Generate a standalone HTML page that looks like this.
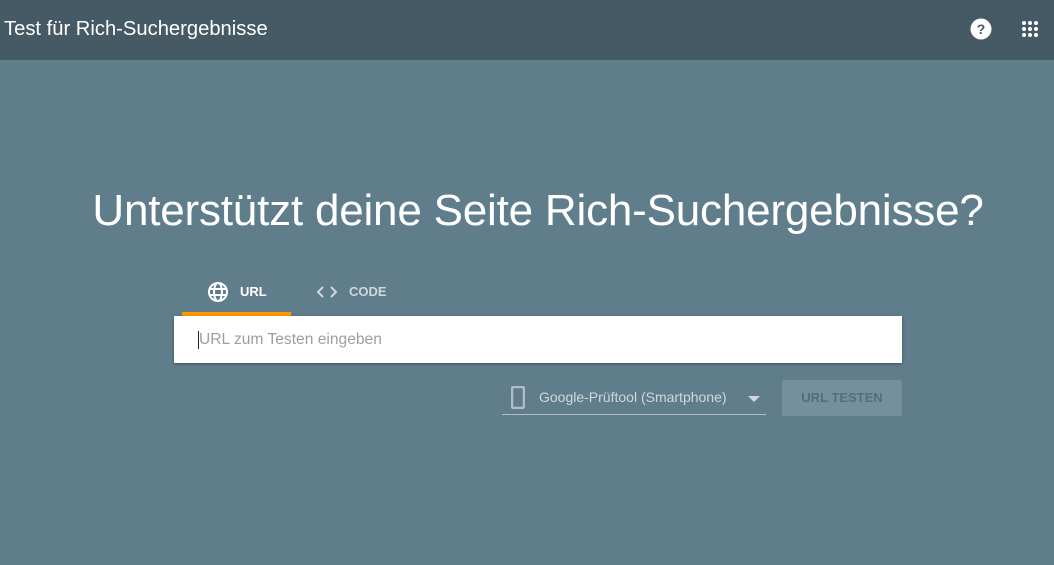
<!DOCTYPE html>
<html><head><style>
body{margin:0;width:1054px;height:565px;background:#607d8b;font-family:"Liberation Sans",sans-serif;overflow:hidden;position:relative}
.top{position:absolute;left:0;top:0;width:1054px;height:60px;background:#455a64}
.title{position:absolute;left:4px;top:18px;color:#fff;font-size:20.2px}
h1{position:absolute;left:0;width:1076px;top:186px;margin:0;text-align:center;color:#fff;font-weight:300;font-size:44px;letter-spacing:-0.2px}
.tab{position:absolute;top:284px;font-size:13px;font-weight:bold}
.ul{position:absolute;left:182px;top:312px;width:109px;height:4px;background:#ff9800}
.inp{position:absolute;left:174px;top:316px;width:728px;height:47px;background:#fff;box-shadow:0 1px 3px rgba(0,0,0,.35)}
.ph{position:absolute;left:24px;top:15px;font-size:15.6px;color:#9e9e9e;border-left:1px solid #222;padding-left:0}
.sel{position:absolute;left:502px;top:380px;width:264px;height:34px;border-bottom:1px solid #b0bec5}
.btn{position:absolute;left:782px;top:380px;width:120px;height:36px;background:#74909c;border-radius:2px;color:#546e7a;font-size:13px;font-weight:bold;text-align:center;line-height:36px}
</style></head><body>
<div class="top"><div class="title">Test für Rich-Suchergebnisse</div>
<svg style="position:absolute;left:970px;top:18px" width="22" height="22" viewBox="0 0 22 22"><circle cx="11" cy="11" r="10.5" fill="#fff"/><text x="11" y="16" text-anchor="middle" font-family="Liberation Sans" font-weight="bold" font-size="14" fill="#455a64">?</text></svg>
<svg style="position:absolute;left:1021px;top:20px" width="18" height="18"><g fill="#fff"><circle cx="3" cy="3" r="2"/><circle cx="9" cy="3" r="2"/><circle cx="15" cy="3" r="2"/><circle cx="3" cy="9" r="2"/><circle cx="9" cy="9" r="2"/><circle cx="15" cy="9" r="2"/><circle cx="3" cy="15" r="2"/><circle cx="9" cy="15" r="2"/><circle cx="15" cy="15" r="2"/></g></svg>
</div>
<h1>Unterstützt deine Seite Rich-Suchergebnisse?</h1>
<svg style="position:absolute;left:207px;top:281px" width="22" height="22" viewBox="0 0 22 22"><g fill="none" stroke="#fff" stroke-width="2"><circle cx="11" cy="11" r="9"/><ellipse cx="11" cy="11" rx="4" ry="9"/><line x1="2" y1="8" x2="20" y2="8"/><line x1="2" y1="14" x2="20" y2="14"/></g></svg>
<div class="tab" style="left:240px;color:#fff">URL</div>
<svg style="position:absolute;left:316px;top:284px" width="22" height="16"><path d="M7 3L2 8l5 5M15 3l5 5-5 5" fill="none" stroke="#cfd8dc" stroke-width="2"/></svg>
<div class="tab" style="left:349px;color:#cfd8dc">CODE</div>
<div class="ul"></div>
<div class="inp"><div class="ph">URL zum Testen eingeben</div></div>
<div class="sel">
<svg style="position:absolute;left:9px;top:6px" width="14" height="23"><rect x="1" y="1" width="12" height="21" rx="1.5" fill="none" stroke="#b0bec5" stroke-width="2.5"/></svg>
<div style="position:absolute;left:37px;top:9px;font-size:14px;color:#cfd8dc">Google-Prüftool (Smartphone)</div>
<svg style="position:absolute;left:246px;top:16px" width="12" height="6"><path d="M0 0h12L6 6z" fill="#cfd8dc"/></svg>
</div>
<div class="btn">URL TESTEN</div>
</body></html>
